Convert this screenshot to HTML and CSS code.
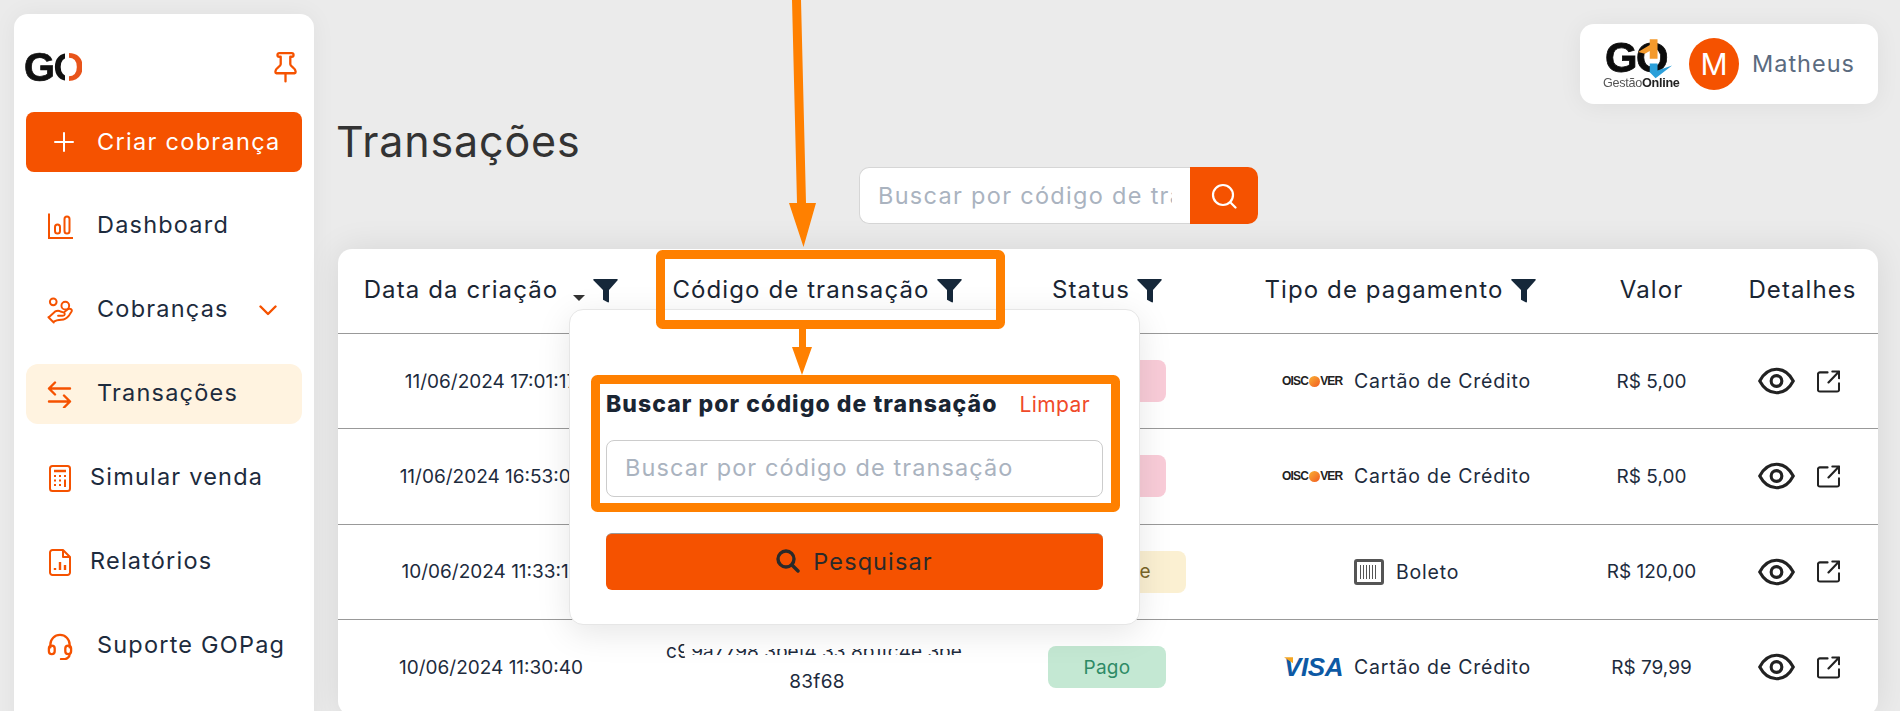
FILE: index.html
```html
<!DOCTYPE html>
<html lang="pt-BR">
<head>
<meta charset="utf-8">
<title>Transações</title>
<link rel="stylesheet" href="styles.css">
</head>
<body>
<aside class="sidebar">
  <div class="brand-row">
    <div class="brand"><span>G</span><span class="brand-o">O</span></div>
    <svg class="pin" viewBox="0 0 24 32" fill="none" stroke="#f55200" stroke-width="2.4" stroke-linejoin="round" stroke-linecap="round"><path d="M5.500 1.500h13a1.800 1.800 0 0 1 0 3.800H17v7.700c0 2.500 5.500 4 5.500 7.500v1a1 1 0 0 1-1 1h-19a1 1 0 0 1-1-1v-1c0-3.500 5.500-5 5.500-7.500V5.300H5.500a1.800 1.800 0 0 1 0-3.800zM12 22.500v8.500"/></svg>
  </div>
  <button class="create"><svg class="plus" viewBox="0 0 20 20" stroke="#fff" stroke-width="2" stroke-linecap="round"><path d="M10 1v18M1 10h18"/></svg>Criar cobrança</button>
  <nav class="nav">
    <a class="nav-item"><svg class="nav-icon" viewBox="0 0 26 26" fill="none" stroke="#f55200" stroke-width="2"><path d="M2 0v24.500h24" /><rect x="8" y="11" width="5" height="9" rx="2.500"/><rect x="17.500" y="3" width="5" height="17" rx="2.500"/></svg><span>Dashboard</span></a>
    <a class="nav-item"><svg class="nav-icon" viewBox="0 0 26 28" fill="none" stroke="#f55200" stroke-width="2" stroke-linecap="round" stroke-linejoin="round"><circle cx="6" cy="5" r="3.500"/><circle cx="18.500" cy="9" r="4"/><path d="M1 21l5.500 5.500M6 26c3-2.500 5-2.500 8.500-2.500 4 0 6-2 8-4.500l2.500-4c1-2-1.500-3.500-3.500-2.500l-4 3M2 20.500l6-5.500c2-1 4-1 5.500 0l3 1c2 .5 2 3.500-.5 3.500h-5"/></svg><span>Cobranças</span><svg class="chev" viewBox="0 0 18 11" fill="none" stroke="#f55200" stroke-width="2.400" stroke-linecap="round" stroke-linejoin="round"><path d="M1.500 1.500L9 9l7.500-7.500"/></svg></a>
    <a class="nav-item active"><svg class="nav-icon" viewBox="0 0 26 26" fill="none" stroke="#f55200" stroke-width="2.400" stroke-linecap="round" stroke-linejoin="round"><path d="M2 7h21M8 1L2 7l6 6M2 20h21M17 14l6 6-6 6"/></svg><span>Transações</span></a>
    <a class="nav-item tight"><svg class="nav-icon small" viewBox="0 0 22 27" fill="none" stroke="#f55200" stroke-width="2"><rect x="1" y="1" width="20" height="25" rx="2.500"/><path d="M5 6h12" stroke-width="2.500"/><path d="M5 11h2M10 11h2M15 11h2M5 15.500h2M10 15.500h2M15 15.500h2M5 20h2M10 20h2M16 15v7"/></svg><span>Simular venda</span></a>
    <a class="nav-item tight"><svg class="nav-icon small" viewBox="0 0 22 27" fill="none" stroke="#f55200" stroke-width="2" stroke-linejoin="round"><path d="M3.500 1H14l7 7v15.500a2.500 2.500 0 0 1-2.500 2.500h-15A2.500 2.500 0 0 1 1 23.500v-20A2.500 2.500 0 0 1 3.500 1zM14 1v7h7"/><path d="M6 21v-2M11 21v-8M16 21v-5" stroke-width="2.400"/></svg><span>Relatórios</span></a>
    <a class="nav-item"><svg class="nav-icon" viewBox="0 0 26 28" fill="none" stroke="#f55200" stroke-width="2.400" stroke-linecap="round"><path d="M3 15v-3a10 10 0 0 1 20 0v3"/><rect x="1.500" y="13" width="6" height="9" rx="3"/><rect x="18.500" y="13" width="6" height="9" rx="3"/><path d="M23 22c0 3-3 5-5 5h-4"/></svg><span>Suporte GOPag</span></a>
  </nav>
</aside>

<main class="main">
  <div class="topbar">
    <div class="user-card">
      <svg class="user-logo" viewBox="0 0 72 54">
        <text class="logo-go" x="-1" y="33">GO</text>
        <path d="M33 12l12-7v-6l8 0v20h-8v-8l-5 3z" fill="#f49a2c"/>
        <path d="M45 24h8v7l15-5-17 13-6-6z" fill="#2b9fd9"/>
        <text class="logo-sub" x="-3" y="48">Gestão<tspan class="logo-sub-b">Online</tspan></text>
      </svg>
      <div class="avatar">M</div>
      <span class="user-name">Matheus</span>
    </div>
  </div>
  <h1 class="title">Transações</h1>
  <div class="search">
    <input class="search-input" placeholder="Buscar por código de transação">
    <button class="search-btn"><svg viewBox="0 0 26 26" fill="none" stroke="#fff" stroke-width="2.200" stroke-linecap="round"><circle cx="12" cy="12" r="10"/><path d="M19.500 19.500l5 5"/></svg></button>
  </div>

  <section class="card">
    <div class="row head">
      <div class="cell"><span>Data da criação</span><i class="caret"></i><svg class="funnel" viewBox="0 0 25 24"><path d="M1 0h23c.8 0 1 .8.600 1.300L16 11v11.500c0 .8-.6 1.200-1.300.8l-4.700-2.500V11L.4 1.300C0 .8.200 0 1 0z"/></svg></div>
      <div class="cell"><span>Código de transação</span><svg class="funnel" viewBox="0 0 25 24"><path d="M1 0h23c.8 0 1 .8.600 1.300L16 11v11.500c0 .8-.6 1.200-1.300.8l-4.700-2.500V11L.4 1.300C0 .8.200 0 1 0z"/></svg></div>
      <div class="cell"><span>Status</span><svg class="funnel" viewBox="0 0 25 24"><path d="M1 0h23c.8 0 1 .8.600 1.300L16 11v11.500c0 .8-.6 1.200-1.300.8l-4.700-2.500V11L.4 1.300C0 .8.200 0 1 0z"/></svg></div>
      <div class="cell"><span>Tipo de pagamento</span><svg class="funnel" viewBox="0 0 25 24"><path d="M1 0h23c.8 0 1 .8.600 1.300L16 11v11.500c0 .8-.6 1.200-1.300.8l-4.700-2.500V11L.4 1.300C0 .8.200 0 1 0z"/></svg></div>
      <div class="cell"><span>Valor</span></div>
      <div class="cell"><span>Detalhes</span></div>
    </div>

    <div class="row">
      <div class="cell">11/06/2024 17:01:17</div>
      <div class="cell"></div>
      <div class="cell"><span class="pill pink">Falhou</span></div>
      <div class="cell pay"><span class="brand-slot"><span class="discover">OISC<i class="dot"></i>VER</span></span>Cartão de Crédito</div>
      <div class="cell">R$ 5,00</div>
      <div class="cell actions"><svg class="eye" viewBox="0 0 38 28" fill="none" stroke="#222" stroke-width="3.200"><path d="M1.800 14C6 6 12 2 19 2s13 4 17.200 12C32 22 26 26 19 26S6 22 1.800 14z"/><circle cx="19" cy="14" r="5.500"/></svg><svg class="open" viewBox="0 0 24 24" fill="none" stroke="#222" stroke-width="2.200" stroke-linecap="round" stroke-linejoin="round"><path d="M11 2.500H3a2 2 0 0 0-2 2v16a2 2 0 0 0 2 2h18a2 2 0 0 0 2-2V14M12 13L23 1.500M16 1.500h7v7"/></svg></div>
    </div>
    <div class="row">
      <div class="cell">11/06/2024 16:53:02</div>
      <div class="cell"></div>
      <div class="cell"><span class="pill pink">Falhou</span></div>
      <div class="cell pay"><span class="brand-slot"><span class="discover">OISC<i class="dot"></i>VER</span></span>Cartão de Crédito</div>
      <div class="cell">R$ 5,00</div>
      <div class="cell actions"><svg class="eye" viewBox="0 0 38 28" fill="none" stroke="#222" stroke-width="3.200"><path d="M1.800 14C6 6 12 2 19 2s13 4 17.200 12C32 22 26 26 19 26S6 22 1.800 14z"/><circle cx="19" cy="14" r="5.500"/></svg><svg class="open" viewBox="0 0 24 24" fill="none" stroke="#222" stroke-width="2.200" stroke-linecap="round" stroke-linejoin="round"><path d="M11 2.500H3a2 2 0 0 0-2 2v16a2 2 0 0 0 2 2h18a2 2 0 0 0 2-2V14M12 13L23 1.500M16 1.500h7v7"/></svg></div>
    </div>
    <div class="row">
      <div class="cell">10/06/2024 11:33:19</div>
      <div class="cell"></div>
      <div class="cell"><span class="pill yellow">Pendente</span></div>
      <div class="cell pay"><span class="brand-slot"></span><i class="barcode"></i>Boleto</div>
      <div class="cell">R$ 120,00</div>
      <div class="cell actions"><svg class="eye" viewBox="0 0 38 28" fill="none" stroke="#222" stroke-width="3.200"><path d="M1.800 14C6 6 12 2 19 2s13 4 17.200 12C32 22 26 26 19 26S6 22 1.800 14z"/><circle cx="19" cy="14" r="5.500"/></svg><svg class="open" viewBox="0 0 24 24" fill="none" stroke="#222" stroke-width="2.200" stroke-linecap="round" stroke-linejoin="round"><path d="M11 2.500H3a2 2 0 0 0-2 2v16a2 2 0 0 0 2 2h18a2 2 0 0 0 2-2V14M12 13L23 1.500M16 1.500h7v7"/></svg></div>
    </div>
    <div class="row">
      <div class="cell">10/06/2024 11:30:40</div>
      <div class="cell code">
        <span class="code-line code-first">c9</span><span class="code-line">83f68</span>
        <div class="code-mask"><span class="code-slice">9a7798 3bef4 33 8b1fc4e 3be</span></div>
      </div>
      <div class="cell"><span class="pill green">Pago</span></div>
      <div class="cell pay"><span class="brand-slot"><span class="visa">VISA</span></span>Cartão de Crédito</div>
      <div class="cell">R$ 79,99</div>
      <div class="cell actions"><svg class="eye" viewBox="0 0 38 28" fill="none" stroke="#222" stroke-width="3.200"><path d="M1.800 14C6 6 12 2 19 2s13 4 17.200 12C32 22 26 26 19 26S6 22 1.800 14z"/><circle cx="19" cy="14" r="5.500"/></svg><svg class="open" viewBox="0 0 24 24" fill="none" stroke="#222" stroke-width="2.200" stroke-linecap="round" stroke-linejoin="round"><path d="M11 2.500H3a2 2 0 0 0-2 2v16a2 2 0 0 0 2 2h18a2 2 0 0 0 2-2V14M12 13L23 1.500M16 1.500h7v7"/></svg></div>
    </div>

    <div class="popup">
      <div class="popup-head"><strong class="popup-title">Buscar por código de transação</strong><a class="clear">Limpar</a></div>
      <input class="popup-input" placeholder="Buscar por código de transação">
      <button class="popup-btn"><svg viewBox="0 0 24 24" fill="none" stroke="#2a2a2a" stroke-width="3.400" stroke-linecap="round"><circle cx="10" cy="10" r="8"/><path d="M16 16l6 6"/></svg>Pesquisar</button>
    </div>
  </section>
</main>

<svg class="notes" viewBox="0 0 1900 711">
  <rect class="note-box" x="660.500" y="254.500" width="340" height="70" rx="2"/>
  <rect class="note-box" x="595.500" y="379.500" width="520" height="128" rx="2"/>
  <path class="note-fill" d="M792 0h9l5 203h10l-12.500 44L789 203h8z"/>
  <path class="note-fill" d="M799 329h7v18h6l-10 28-10-28h7z"/>
</svg>
</body>
</html>
```
FILE: styles.css
```css
* { box-sizing: border-box; }
html, body { height: 711px; overflow: hidden; }
body {
  margin: 0;
  display: flex;
  background: #ebebeb;
  color: #1a2533;
  font-family: Inter, "Noto Sans", sans-serif;
  position: relative;
}
.sidebar {
  flex: 0 0 300px;
  height: 720px;
  margin: 14px 0 0 14px;
  padding: 26px 12px 0;
  background: #fff;
  border-radius: 14px;
  box-shadow: 0 0 24px rgba(0, 0, 0, .05);
}
.brand-row { display: flex; align-items: center; justify-content: space-between; height: 54px; margin-bottom: 18px; padding-right: 5px; }
.brand { margin-left: -2px; font: 900 40px/1 "Liberation Sans", sans-serif; letter-spacing: -2px; color: #111; -webkit-text-stroke: .7px #111; filter: blur(.4px); }
.brand-o { background: linear-gradient(90deg, #111 0 42%, #fff 42% 56%, #e8541a 56%); -webkit-background-clip: text; background-clip: text; color: transparent; -webkit-text-stroke: 0; }
.pin { width: 23px; height: 32px; }
.create {
  display: flex; align-items: center; gap: 23px; width: 276px; height: 60px;
  padding: 0 0 0 28px; border: 0; border-radius: 8px; background: #f55200; color: #fff;
  font: 400 23.500px/1 Inter, sans-serif; letter-spacing: 1.300px;
}
.plus { width: 20px; height: 20px; }
.nav { display: flex; flex-direction: column; gap: 24px; margin-top: 24px; }
.nav-item { display: flex; align-items: center; height: 60px; padding-left: 21px; border-radius: 12px; font-size: 23.500px; letter-spacing: 1.200px; color: #1d2b3d; }
.nav-item span { margin-bottom: 3px; }
.nav-item.active { background: #fff3e0; }
.nav-icon { flex: 0 0 26px; width: 26px; height: 27px; margin-right: 24px; }
.nav-icon.small { flex-basis: 22px; width: 22px; margin: 0 19px 0 2px; }
.chev { width: 18px; height: 11px; margin-left: 30px; }
.main { flex: 1; min-width: 0; padding: 24px 22px 0 24px; }
.topbar { display: flex; justify-content: flex-end; }
.user-card {
  display: flex; align-items: center; width: 298px; height: 80px; padding-left: 26px;
  background: #fff; border-radius: 14px; box-shadow: 0 2px 24px rgba(0, 0, 0, .06);
}
.user-logo { width: 70px; height: 53px; margin-top: 4px; overflow: visible; filter: blur(.35px); }
.logo-go { font: 900 43px "Liberation Sans", sans-serif; letter-spacing: -1.500px; fill: #0c0c0c; stroke: #0c0c0c; stroke-width: .8px; }
.logo-sub { font: 400 13px "Liberation Sans", sans-serif; letter-spacing: -.3px; fill: #555; }
.logo-sub-b { font-weight: 700; fill: #222; }
.avatar { display: flex; align-items: center; justify-content: center; width: 50px; height: 52px; margin: 0 13px; border-radius: 50%; background: #f55200; color: #fff; font-size: 30px; }
.user-name { margin-bottom: 2px; font-size: 23.500px; letter-spacing: 1px; color: #5b6b7f; }
.title { margin: 13px 0 0 -2px; font-size: 43px; line-height: 48px; font-weight: 400; letter-spacing: .85px; color: #333; }
.search { display: flex; width: 399px; height: 57px; margin: 2px 0 0 521px; }
.search-input { flex: 1; min-width: 0; padding: 0 18px; border: 1px solid #d6d6d6; border-right: 0; border-radius: 10px 0 0 10px; background: #fff; font: 400 23.500px Inter, sans-serif; letter-spacing: 1.300px; outline: 0; }
.search-input::placeholder, .popup-input::placeholder { color: #aab3bf; opacity: 1; }
.search-btn { flex: 0 0 68px; padding: 0; border: 0; border-radius: 0 10px 10px 0; background: #f55200; }
.search-btn svg { display: block; width: 26px; height: 26px; margin: auto; }
.card { position: relative; margin-top: 25px; background: #fff; border-radius: 14px; box-shadow: 0 0 34px rgba(0, 0, 0, .09); }
.row { display: grid; grid-template-columns: 306px 346px 234px 352px 151px 151px; height: 95.330px; border-bottom: 1px solid #999; font-size: 19px; color: #1d2b3d; }
.row.head { height: 85px; font-size: 24px; letter-spacing: 1.100px; color: #1a2533; }
.head span { margin-bottom: 3px; }
.cell { position: relative; display: flex; align-items: center; justify-content: center; min-width: 0; white-space: nowrap; }
.caret { width: 0; height: 0; margin: 13px 8px 0 15px; border: 6.500px solid transparent; border-top-color: #333; border-bottom: 0; }
.funnel { flex: 0 0 25px; width: 25px; height: 24px; margin-left: 7px; fill: #16283a; }
.caret + .funnel { margin-left: 0; }
.pill { display: flex; align-items: center; justify-content: center; width: 118px; height: 42px; border-radius: 8px; font-size: 19px; letter-spacing: .3px; }
.pink { background: #f9ccd8; color: #b23a52; }
.yellow { width: 158px; background: #fbf0d2; color: #7a6528; }
.green { background: #c4e8d3; color: #2e8b66; }
.pay { justify-content: flex-start; padding-left: 58px; font-size: 19.500px; letter-spacing: .8px; }
.brand-slot { flex: 0 0 72px; display: flex; align-items: center; }
.discover { font: 700 12px "Liberation Sans", sans-serif; letter-spacing: -.8px; color: #222; display: flex; align-items: center; }
.dot { width: 11px; height: 11px; margin: 0 .5px; border-radius: 50%; background: linear-gradient(135deg, #f9b233, #f15a22); }
.visa { position: relative; margin-left: 2px; font: italic 700 26px/1 "Liberation Sans", sans-serif; letter-spacing: -.4px; color: #0d59a4; }
.visa::before { content: ""; position: absolute; left: 0; top: 3px; width: 9px; height: 6px; background: #f5a623; clip-path: polygon(0 0, 100% 0, 100% 100%); }
.barcode { width: 30px; height: 26px; margin-right: 12px; border: 3px solid #555; border-radius: 3px; background: repeating-linear-gradient(90deg, #555 0 1.500px, #fff 1.500px 3px) content-box; padding: 3px; }
.actions { gap: 22px; padding-right: 8px; }
.eye { width: 37px; height: 28px; }
.open { width: 23px; height: 23px; }
.code { flex-direction: column; }
.code-line { height: 30px; line-height: 30px; letter-spacing: .3px; }
.code-first { width: 302px; }
.code-mask { position: absolute; left: 40px; top: 20px; width: 285px; height: 20px; padding-top: 9px; background: #fff; border-radius: 6px; overflow: hidden; }
.code-slice { display: block; height: 6px; overflow: hidden; font-size: 19px; line-height: 6px; text-align: center; }
.popup {
  position: absolute; left: 231px; top: 60px; width: 571px; height: 316px; padding: 79px 36px 0;
  display: flex; flex-direction: column;
  background: #fff; border: 1px solid #e6e6e6; border-radius: 14px; box-shadow: 0 8px 34px rgba(0, 0, 0, .1);
}
.popup-head { display: flex; align-items: center; justify-content: space-between; height: 30px; padding-right: 13px; }
.popup-title { font-size: 23px; font-weight: 800; letter-spacing: 1.050px; color: #1a2533; }
.clear { font-size: 21px; letter-spacing: .4px; color: #f04a2a; }
.popup-input { height: 57px; margin-top: 21px; padding: 0 18px 3px; border: 1px solid #ccc; border-radius: 8px; font: 400 23.500px Inter, sans-serif; letter-spacing: 1.100px; outline: 0; }
.popup-btn {
  display: flex; align-items: center; justify-content: center; gap: 13px; height: 57px; margin-top: 36px; padding: 0 0 2px;
  border: 0; border-top: 1px solid #999; border-radius: 6px; background: #f55200; color: #2a2a2a;
  font: 400 23.500px Inter, sans-serif; letter-spacing: 1.100px;
}
.popup-btn svg { width: 24px; height: 24px; }
.notes { position: absolute; left: 0; top: 0; width: 1900px; height: 711px; pointer-events: none; }
.note-box { fill: none; stroke: #ff8000; stroke-width: 9; }
.note-fill { fill: #ff8000; }
```
